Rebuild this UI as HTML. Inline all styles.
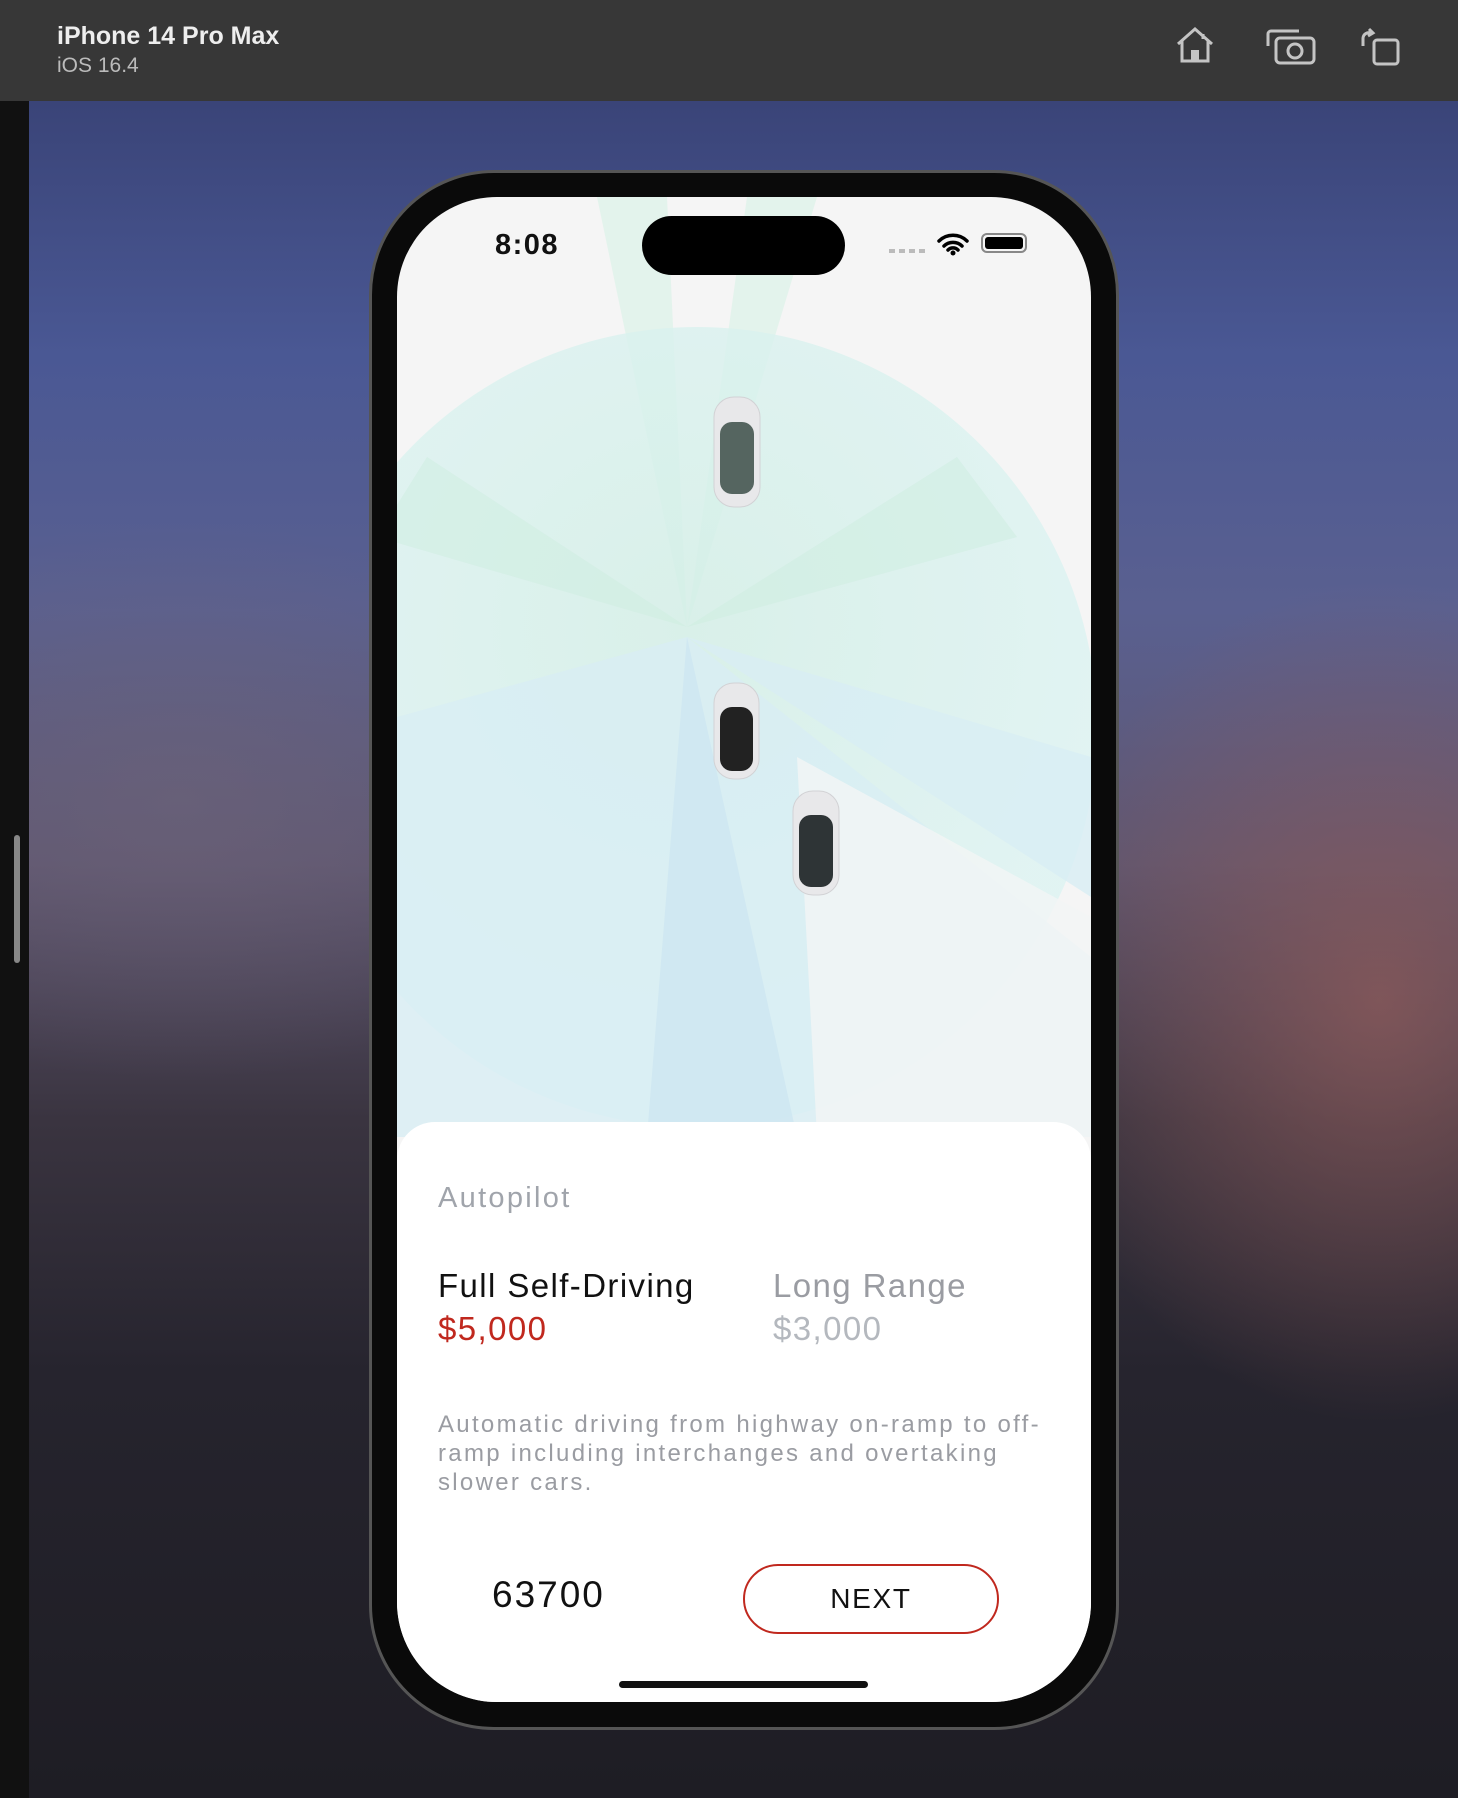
<!DOCTYPE html>
<html><head><meta charset="utf-8"><style>
*{margin:0;padding:0;box-sizing:border-box}
body{width:1458px;height:1798px;overflow:hidden;position:relative;font-family:"Liberation Sans",sans-serif;background:#1e1d24}
.bg{position:absolute;left:29px;top:101px;width:1429px;height:1697px;
background:radial-gradient(ellipse 500px 600px at 1350px 900px,rgba(140,90,90,.8),rgba(140,90,90,0) 70%),
radial-gradient(ellipse 600px 400px at 150px 700px,rgba(110,100,120,.6),rgba(0,0,0,0) 70%),
linear-gradient(180deg,#3a4478 0%,#4a5894 15%,#5a6090 30%,#5e5670 45%,#3a3440 60%,#26242e 75%,#1e1d24 100%)}
.left{position:absolute;left:0;top:0;width:29px;height:1798px;background:#111}
.left i{position:absolute;left:14px;top:835px;width:6px;height:128px;border-radius:3px;background:#888}
.top{position:absolute;left:0;top:0;width:1458px;height:101px;background:#373737}
.top h1{position:absolute;left:57px;top:22px;font-size:25px;color:#eee;font-weight:bold}
.top p{position:absolute;left:57px;top:54px;font-size:21px;color:#bbb}
.phone{position:absolute;left:369px;top:170px;width:750px;height:1560px;border-radius:125px;background:#0a0a0a;border:3px solid #555}
.screen{position:absolute;left:397px;top:197px;width:694px;height:1505px;border-radius:100px;overflow:hidden;background:#f5f5f5}
.sheet{position:absolute;left:0;top:925px;width:694px;height:600px;background:#fff;border-radius:38px 38px 0 0}
.t{position:absolute;font-family:"Liberation Sans",sans-serif;white-space:nowrap}
</style></head><body>
<div class="bg"></div>
<div class="left"><i></i></div>
<div class="top"><h1>iPhone 14 Pro Max</h1><p>iOS 16.4</p>
<svg style="position:absolute;left:1170px;top:26px" width="260" height="40" viewBox="0 0 260 40" fill="none" stroke="#c4c4c4" stroke-width="3">
<path d="M8 18 L25 3 L42 18 M12 15 V35 H38 V15 M33 8 V13"/><rect x="21" y="24" width="8" height="11" fill="#c4c4c4" stroke="none"/>
<rect x="106" y="12" width="38" height="25" rx="4"/><path d="M98 20 V8 a3 3 0 0 1 3-3 h28"/><circle cx="125" cy="25" r="7"/>
<path d="M193 20 V12 a6 6 0 0 1 8-5 M199 3 l4 4 -5 3"/><rect x="204" y="14" width="24" height="24" rx="3"/>
</svg></div>
<div class="phone"></div>
<div class="screen">
<svg width="694" height="940" style="position:absolute;left:0;top:0">
<defs><radialGradient id="g" cx="290" cy="430" r="420" gradientUnits="userSpaceOnUse"><stop offset="0" stop-color="#d2efe6"/><stop offset="1" stop-color="#dcf3f2"/></radialGradient></defs>
<path d="M290 430 L200 0 L270 0 Z M290 430 L350 0 L420 0Z" fill="#dff3ea" opacity=".8"/>
<circle cx="300" cy="530" r="400" fill="url(#g)" opacity=".8"/>
<path d="M290 430 L30 260 L-20 340 Z M290 430 L560 260 L620 340Z" fill="#cdeee0" opacity=".5"/>
<path d="M290 440 L694 560 L694 700 Z M290 440 L0 520 L0 940 L694 940 L694 760Z" fill="#d8eef4" opacity=".8"/>
<path d="M290 440 L250 940 L400 940 Z" fill="#cde6f1" opacity=".8"/>
<path d="M400 560 L694 720 L694 940 L420 940Z" fill="#f2f5f5" opacity=".8"/>
<g fill="#e8e8ea" stroke="#d2d2d5"><rect x="317" y="200" width="46" height="110" rx="20"/><rect x="317" y="486" width="45" height="96" rx="20"/><rect x="396" y="594" width="46" height="104" rx="20"/></g>
<rect x="323" y="225" width="34" height="72" rx="12" fill="#556560"/>
<rect x="323" y="510" width="33" height="64" rx="12" fill="#222"/>
<rect x="402" y="618" width="34" height="72" rx="12" fill="#2e3436"/>
</svg>
<div style="position:absolute;left:245px;top:19px;width:203px;height:59px;border-radius:30px;background:#000"></div>
<div class="t" style="left:98px;top:32px;font-size:29px;font-weight:bold;color:#111;letter-spacing:1.5px">8:08</div>
<div style="position:absolute;left:492px;top:52px;width:36px;height:4px;background:repeating-linear-gradient(90deg,#bbb 0 6px,transparent 6px 10px)"></div>
<svg style="position:absolute;left:540px;top:35px" width="32" height="24" viewBox="0 0 32 24"><path d="M2 9 a20 20 0 0 1 28 0 M7 14 a13 13 0 0 1 18 0 M11 18 a7 7 0 0 1 10 0" stroke="#000" stroke-width="3.5" fill="none" stroke-linecap="round"/><circle cx="16" cy="21" r="2.5"/></svg>
<div style="position:absolute;left:584px;top:36px;width:46px;height:20px;border:2px solid #888;border-radius:6px;padding:2px"><div style="width:100%;height:100%;background:#000;border-radius:3px"></div></div>
<div class="sheet">
<div class="t" style="left:41px;top:60px;font-size:29px;color:#a0a4ab;letter-spacing:2.3px">Autopilot</div>
<div class="t" style="left:41px;top:145px;font-size:33px;color:#111;letter-spacing:1.4px">Full Self-Driving</div>
<div class="t" style="left:41px;top:188px;font-size:33px;color:#c0281e;letter-spacing:1.4px">$5,000</div>
<div class="t" style="left:376px;top:145px;font-size:33px;color:#9a9ca2;letter-spacing:1.4px">Long Range</div>
<div class="t" style="left:376px;top:188px;font-size:33px;color:#b4b8be;letter-spacing:1.4px">$3,000</div>
<div class="t" style="left:41px;top:288px;font-size:24px;line-height:29px;color:#9a9ca2;white-space:normal;width:625px;letter-spacing:2.3px">Automatic driving from highway on-ramp to off-ramp including interchanges and overtaking slower cars.</div>
<div class="t" style="left:95px;top:452px;font-size:37px;color:#111;letter-spacing:2px">63700</div>
<div style="position:absolute;left:346px;top:442px;width:256px;height:70px;border:2.5px solid #c0281e;border-radius:35px;text-align:center;line-height:65px;font-size:28px;color:#111;letter-spacing:1.7px">NEXT</div>
<div style="position:absolute;left:222px;top:559px;width:249px;height:7px;border-radius:4px;background:#111"></div>
</div>
</div>
</body></html>
